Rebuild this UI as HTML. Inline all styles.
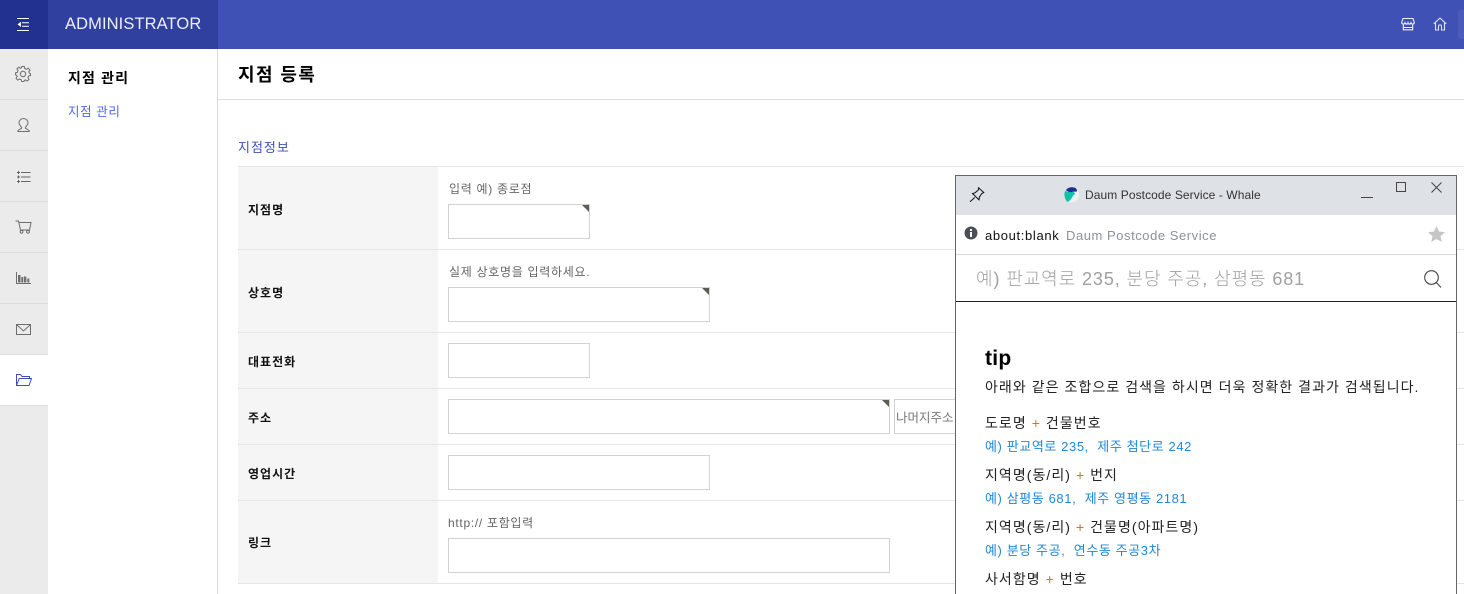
<!DOCTYPE html>
<html lang="ko"><head><meta charset="utf-8"><title>Admin</title>
<style>
*{box-sizing:border-box}
html,body{margin:0;padding:0;width:1464px;height:594px;overflow:hidden;background:#fff}
body{position:relative;font-family:"Liberation Sans","Noto Sans CJK KR",sans-serif;color:#000}
.a{position:absolute}
.t{position:absolute;white-space:nowrap;line-height:16px}
.line{position:absolute;height:1px;background:#e6e6e6}
.input{position:absolute;background:#fff;border:1px solid #d2d2d2}
.req:after{content:"";position:absolute;right:0;top:0;border-top:7px solid #5c5f50;border-left:7px solid transparent}
.th{position:absolute;left:238px;width:200px;background:#f5f5f5}
.b{font-size:12px;font-weight:700;color:#111;letter-spacing:1px}
.hint{font-size:12px;color:#666;letter-spacing:.7px}
svg{position:absolute;overflow:visible;fill:none}
.side{stroke:#6e6e6e;stroke-width:1}
.blue{color:#1f88d8;font-size:13px;letter-spacing:.6px}
.dark{color:#222;font-size:14px;letter-spacing:1.05px}
</style></head><body>

<!-- header -->
<div class="a" style="left:0;top:0;width:1464px;height:49px;background:#3f51b5"></div>
<div class="a" style="left:0;top:0;width:48px;height:49px;background:#223090"></div>
<div class="a" style="left:48px;top:0;width:170px;height:49px;background:#2f409e"></div>
<svg style="left:17px;top:18px" width="12" height="13" viewBox="0 0 12 13"><path d="M0 .5H12M5 4.700H12M5 8.300H12M0 12.500H12" stroke="#fff"/><path d="M4 3.800V9L.5 6.400Z" fill="#fff"/></svg>
<div class="t" style="left:65px;top:14px;font-size:16.500px;line-height:20px;color:#eef0fa;letter-spacing:.1px">ADMINISTRATOR</div>
<svg style="left:1401px;top:17px" width="14" height="14" viewBox="0 0 14 14" stroke="#eef0fa" stroke-width="1.100"><path d="M2 1.500H12L13.300 5.500C13.300 7.500 10.500 7.500 10 5.800 9.500 7.500 7.500 7.500 7 5.800 6.500 7.500 4.500 7.500 4 5.800 3.500 7.500 .7 7.500 .7 5.500ZM2.300 7.500V12.800H11.700V7.500M2.300 10.500H11.700"/></svg>
<svg style="left:1433px;top:17px" width="14" height="14" viewBox="0 0 14 14" stroke="#dfe2f5" stroke-width="1.100"><path d="M.8 6.800 7 1 13.200 6.800M2.500 5.500V13H5.500V9C5.500 7.500 8.500 7.500 8.500 9V13H11.500V5.500"/></svg>
<div class="a" style="left:1458px;top:10px;width:6px;height:29px;background:#4a5bbb;border-radius:3px 0 0 3px"></div>

<!-- icon sidebar -->
<div class="a" style="left:0;top:49px;width:48px;height:545px;background:#ebebeb"></div>
<div class="line" style="left:0;top:99px;width:48px;background:#dcdcdc"></div>
<div class="line" style="left:0;top:150px;width:48px;background:#dcdcdc"></div>
<div class="line" style="left:0;top:201px;width:48px;background:#dcdcdc"></div>
<div class="line" style="left:0;top:252px;width:48px;background:#dcdcdc"></div>
<div class="line" style="left:0;top:303px;width:48px;background:#dcdcdc"></div>
<div class="a" style="left:0;top:354px;width:48px;height:52px;background:#fff;border-top:1px solid #dcdcdc;border-bottom:1px solid #dcdcdc"></div>

<svg class="side" style="left:15px;top:66px" width="16" height="16" viewBox="0 0 16 16"><path d="M6.700.5H9.300L9.800 2.600 11.500 3.300 13.300 2.200 15 4 13.800 5.800 14.500 7.200 15.500 7.800V9.500L13.600 10 12.900 11.700 14 13.500 12.200 15 10.400 13.900 9.500 14.300 9 15.500H6.800L6.300 13.800 4.600 13 2.800 14.100 1 12.300 2.200 10.500 1.600 9.300.5 8.800V6.900L2.300 6.400 3 4.600 1.900 2.800 3.700 1.100 5.500 2.300 6.400 1.900Z"/><circle cx="8" cy="8" r="2.700"/></svg>
<svg class="side" style="left:17px;top:118px" width="13" height="14" viewBox="0 0 13 14"><path d="M.5 13.500H12.500M.7 13.500C1 11.500 3 11.500 4.500 10.300 4.800 9.500 4.500 9 3.500 8 2.500 7 2 6 2 4.800A4.500 4.300 0 0 1 11 4.800C11 6 10.500 7 9.500 8 8.500 9 8.200 9.500 8.500 10.300 10 11.500 12 11.500 12.300 13.500"/></svg>
<svg style="left:17px;top:171px" width="14" height="12" viewBox="0 0 14 12"><path d="M4 1.500H13.500M4 6H13.500M4 10.500H13.500" stroke="#666"/><path d="M1.500 0V3M0 1.500H3M1.500 4.500V7.500M0 6H3M1.500 9V12M0 10.500H3" stroke="#666"/></svg>
<svg class="side" style="left:15px;top:220px" width="17" height="14" viewBox="0 0 17 14"><path d="M.5 1H3.500L5.500 10H14.500L16 2.500H3.700"/><circle cx="6.500" cy="11.800" r="1.400"/><circle cx="13" cy="11.800" r="1.400"/></svg>
<svg style="left:16px;top:272px" width="16" height="13" viewBox="0 0 16 13"><path d="M.5 0V11.500H15" stroke="#6e6e6e"/><path d="M2 3H4.500V10.500H2ZM5.300 5H7.300V10.500H5.300ZM8 4.500H10.300V10.500H8ZM11.300 6.500H13.300V10.500H11.300Z" fill="#6e6e6e"/></svg>
<svg class="side" style="left:16px;top:324px" width="15" height="11" viewBox="0 0 15 11"><path d="M.5.500H14.500V10.500H.5ZM.5.500 7.500 7 14.500.500"/></svg>
<svg style="left:16px;top:374px" width="16" height="12" viewBox="0 0 16 12" stroke="#3f51b5" stroke-width="1"><path d="M.5 11.500V.5H4.500L6 2.500H13.500V4.500M.5 11.500H13L15.500 4.500H3.200L.5 11.500Z"/></svg>

<!-- secondary nav -->
<div class="a" style="left:217px;top:49px;width:1px;height:545px;background:#d8d8d8"></div>
<div class="t" style="left:68px;top:70px;font-size:14px;font-weight:700;letter-spacing:1.150px">지점 관리</div>
<div class="t" style="left:68px;top:104px;font-size:12.500px;color:#4f66f0;letter-spacing:.6px">지점 관리</div>

<!-- title -->
<div class="t" style="left:238px;top:63px;font-size:18px;line-height:24px;font-weight:700;letter-spacing:1.400px">지점 등록</div>
<div class="line" style="left:218px;top:99px;width:1246px;background:#dedede"></div>
<div class="t" style="left:238px;top:140px;font-size:13px;color:#3f51b5;letter-spacing:1px">지점정보</div>

<!-- table -->
<div class="th" style="top:167px;height:82px"></div>
<div class="th" style="top:250px;height:82px"></div>
<div class="th" style="top:333px;height:55px"></div>
<div class="th" style="top:389px;height:55px"></div>
<div class="th" style="top:445px;height:55px"></div>
<div class="th" style="top:501px;height:82px"></div>
<div class="line" style="left:238px;top:166px;width:1226px"></div>
<div class="line" style="left:238px;top:249px;width:1226px"></div>
<div class="line" style="left:238px;top:332px;width:1226px"></div>
<div class="line" style="left:238px;top:388px;width:1226px"></div>
<div class="line" style="left:238px;top:444px;width:1226px"></div>
<div class="line" style="left:238px;top:500px;width:1226px"></div>
<div class="line" style="left:238px;top:583px;width:1226px"></div>

<div class="t b" style="left:248px;top:202px">지점명</div>
<div class="t b" style="left:248px;top:285px">상호명</div>
<div class="t b" style="left:248px;top:354px">대표전화</div>
<div class="t b" style="left:248px;top:410px">주소</div>
<div class="t b" style="left:248px;top:466px">영업시간</div>
<div class="t b" style="left:248px;top:535px">링크</div>

<div class="t hint" style="left:449px;top:181px">입력 예) 종로점</div>
<div class="input req" style="left:448px;top:204px;width:142px;height:35px"></div>
<div class="t hint" style="left:449px;top:264px">실제 상호명을 입력하세요.</div>
<div class="input req" style="left:448px;top:287px;width:262px;height:35px"></div>
<div class="input" style="left:448px;top:343px;width:142px;height:35px"></div>
<div class="input req" style="left:448px;top:399px;width:442px;height:35px"></div>
<div class="input" style="left:894px;top:399px;width:120px;height:35px"></div>
<div class="t" style="left:896px;top:410px;font-size:12.500px;color:#777">나머지주소</div>
<div class="input" style="left:448px;top:455px;width:262px;height:35px"></div>
<div class="t hint" style="left:448px;top:515px">http:// 포함입력</div>
<div class="input" style="left:448px;top:538px;width:442px;height:35px"></div>

<!-- popup -->
<div class="a" style="left:955px;top:175px;width:502px;height:419px;background:#fff;border:1px solid #666;border-bottom:0;overflow:hidden">
  <div class="a" style="left:0;top:0;width:500px;height:39px;background:#dee1e6"></div>
  <svg style="left:13px;top:11px" width="16" height="16" viewBox="0 0 16 16" stroke="#111" stroke-width="1"><path d="M9.500 .8 14.800 5.500 12.800 6.500 10.500 10 10 12.800 3.500 6.500 6 5.800 9.300 3ZM5.800 10.500 1 14.800"/></svg>
  <svg style="left:108px;top:11px" width="15" height="16" viewBox="0 0 15 16"><circle cx="7.500" cy="8" r="7.500" fill="#eef3f2"/><path d="M3.500 15C0 11.500-.5 6 1.500 3.500 3 5.500 5 5 8 5 10 5 11 5.500 11 7 8 8.500 8 13 3.500 15Z" fill="#14bfa8"/><path d="M2 3C3.500 .5 8 -.5 11 .8 12.500 1.500 13 3 13 4.500 11 4.800 9.500 4.500 8 5 5.500 5.300 3.500 5 2 3Z" fill="#1f2f8f"/></svg>
  <div class="t" style="left:129px;top:11px;font-size:12px;color:#333;letter-spacing:.08px">Daum Postcode Service - Whale</div>
  <div class="a" style="left:405px;top:21px;width:12px;height:1px;background:#444"></div>
  <div class="a" style="left:440px;top:6px;width:10px;height:10px;border:1px solid #444"></div>
  <svg style="left:475px;top:6px" width="11" height="11" viewBox="0 0 11 11" stroke="#444"><path d="M.5.500 10.500 10.500M10.500.500.5 10.500"/></svg>

  <svg style="left:8px;top:50px" width="14" height="14" viewBox="0 0 14 14"><circle cx="7" cy="7" r="6.500" fill="#4a4f57"/><path d="M6 3H8V5H6ZM6 6H8V11H6Z" fill="#fff"/></svg>
  <div class="t" style="left:29px;top:52px;font-size:13px;color:#111;letter-spacing:.65px">about:blank</div>
  <div class="t" style="left:110px;top:52px;font-size:13px;color:#8d9199;letter-spacing:.55px">Daum Postcode Service</div>
  <svg style="left:472px;top:50px" width="17" height="16" viewBox="0 0 17 16"><path d="M8.500 0 11 5.500 17 6.200 12.500 10.200 13.800 16 8.500 13 3.200 16 4.500 10.200 0 6.200 6 5.500Z" fill="#c6c6c6"/></svg>
  <div class="a" style="left:0;top:78px;width:500px;height:1px;background:#d8dbe0"></div>

  <div class="t" style="left:20px;top:91px;font-size:18px;line-height:24px;font-weight:300;color:#a0a0a0;letter-spacing:.9px">예) 판교역로 235, 분당 주공, 삼평동 681</div>
  <svg style="left:468px;top:94px" width="18" height="18" viewBox="0 0 18 18" stroke="#444" stroke-width="1.100"><circle cx="7.500" cy="7.500" r="6.800"/><path d="M12.300 12.500 17 17.500"/></svg>
  <div class="a" style="left:0;top:125px;width:500px;height:1px;background:#222"></div>

  <div class="t" style="left:29px;top:171px;font-size:21px;line-height:24px;font-weight:700;color:#000;letter-spacing:.3px">tip</div>
  <div class="t dark" style="left:29px;top:203px">아래와 같은 조합으로 검색을 하시면 더욱 정확한 결과가 검색됩니다.</div>
  <div class="t dark" style="left:29px;top:239px">도로명 <span style="color:#c47a20">+</span> 건물번호</div>
  <div class="t blue" style="left:29px;top:263px">예) 판교역로 235,&nbsp; 제주 첨단로 242</div>
  <div class="t dark" style="left:29px;top:291px">지역명(동/리) <span style="color:#c47a20">+</span> 번지</div>
  <div class="t blue" style="left:29px;top:315px">예) 삼평동 681,&nbsp; 제주 영평동 2181</div>
  <div class="t dark" style="left:29px;top:343px">지역명(동/리) <span style="color:#c47a20">+</span> 건물명(아파트명)</div>
  <div class="t blue" style="left:29px;top:367px">예) 분당 주공,&nbsp; 연수동 주공3차</div>
  <div class="t dark" style="left:29px;top:395px">사서함명 <span style="color:#c47a20">+</span> 번호</div>
</div>
</body></html>
